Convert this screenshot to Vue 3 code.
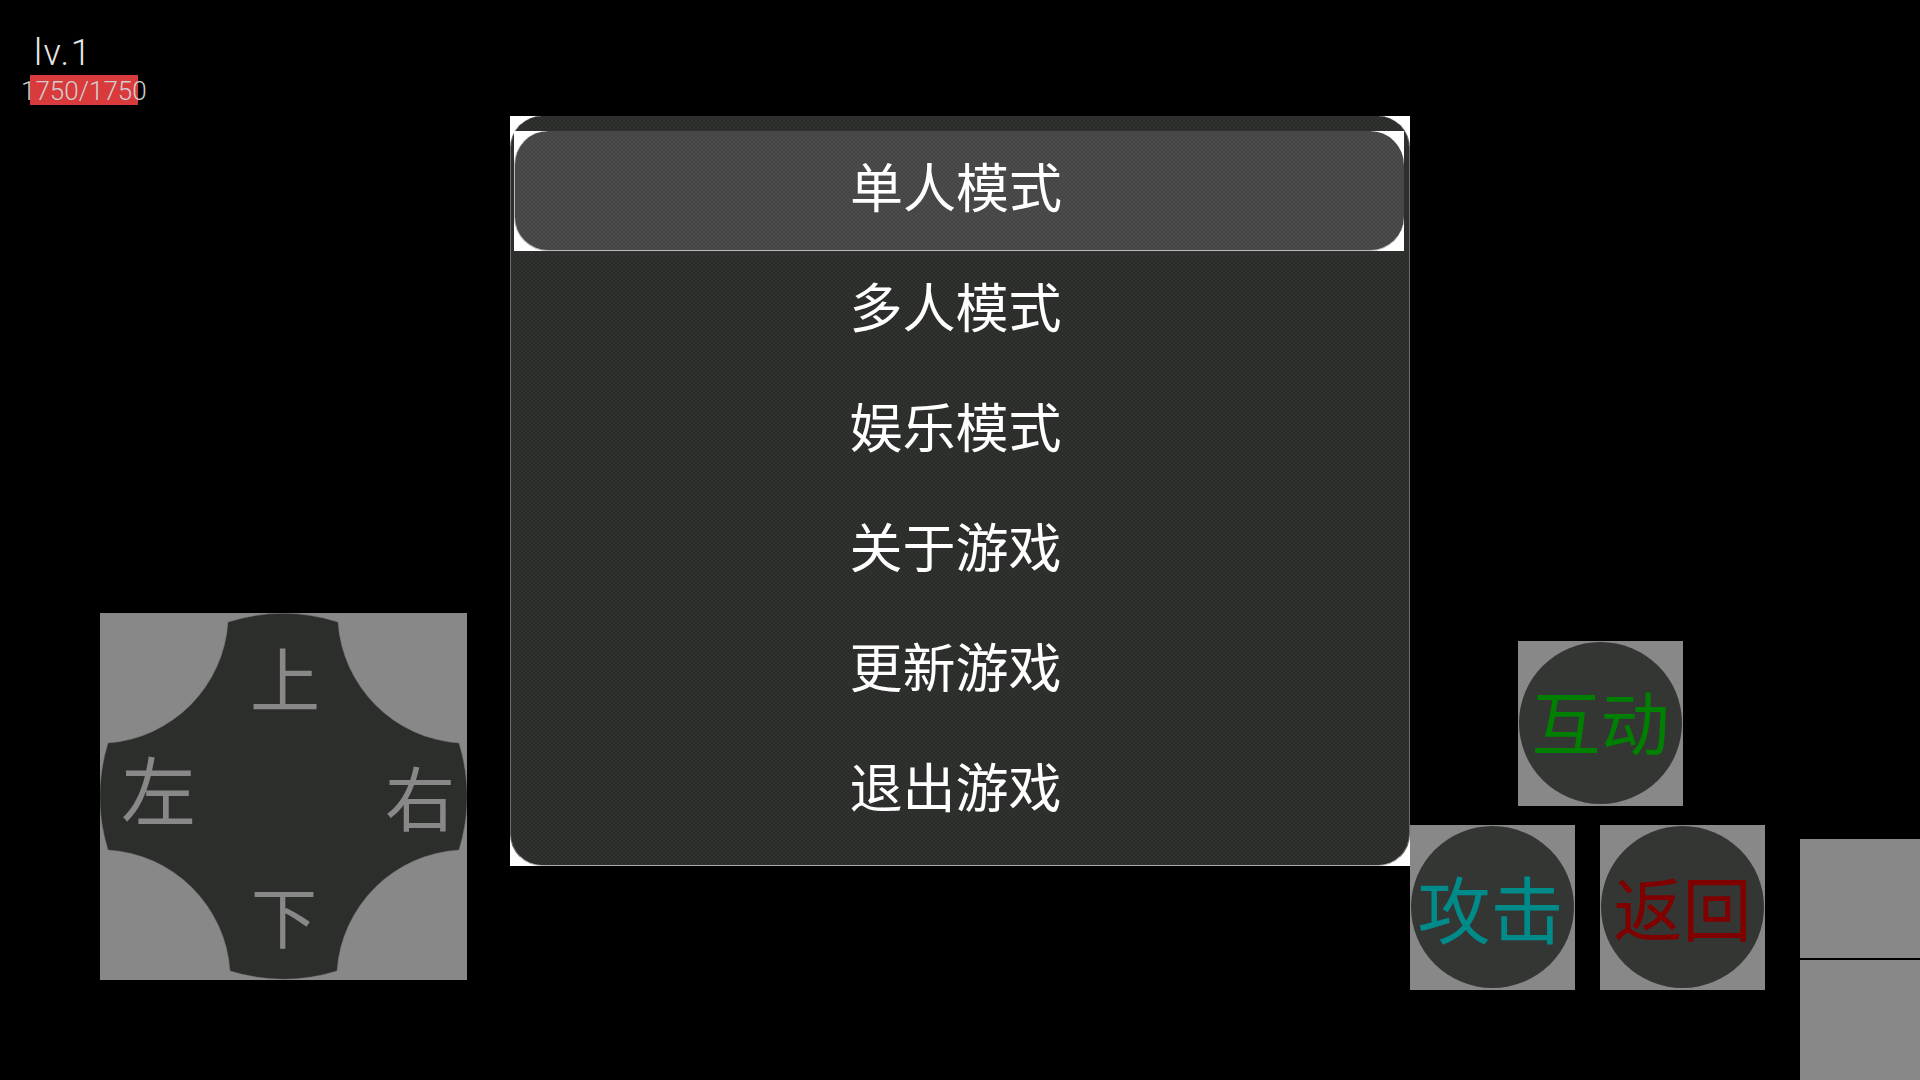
<script setup>
const menu = ['单人模式', '多人模式', '娱乐模式', '关于游戏', '更新游戏', '退出游戏']
</script>

<template>
  <div class="stage">
    <div class="col-left">
      <div class="hud">
        <div class="level">lv.1</div>
        <div class="hp"><span class="hp-text">1750/1750</span></div>
      </div>
      <div class="dpad">
        <svg class="dpad-shape" width="367" height="367" viewBox="0 0 367 367">
          <path class="dpad-fill" d="M128 9A183 183 0 0 1 238 9A130 130 0 0 0 359 130A183 183 0 0 1 359 237A130 130 0 0 0 237 358A183 183 0 0 1 130 358A130 130 0 0 0 8 237A183 183 0 0 1 8 130A130 130 0 0 0 128 9Z" />
        </svg>
        <span class="dir up">上</span>
        <span class="dir left">左</span>
        <span class="dir right">右</span>
        <span class="dir down">下</span>
      </div>
    </div>

    <div class="col-center">
      <div class="panel">
        <div class="panel-inner">
          <div
            v-for="(item, i) in menu"
            :key="item"
            class="row"
            :class="{ active: i === 0 }"
          >
            <div class="row-body">{{ item }}</div>
          </div>
        </div>
      </div>
    </div>

    <div class="col-right">
      <div class="actions">
        <div class="action interact"><div class="disc">互动</div></div>
        <div class="action-row">
          <div class="action attack"><div class="disc">攻击</div></div>
          <div class="action back"><div class="disc">返回</div></div>
        </div>
      </div>
      <div class="side">
        <div class="side-top"></div>
        <div class="side-bottom"></div>
      </div>
    </div>
  </div>
</template>

<style>
html, body { margin: 0; background: #000; }
</style>

<style scoped>
.stage {
  width: 1920px;
  height: 1080px;
  background: #000;
  display: flex;
  overflow: hidden;
  font-family: "Noto Sans CJK SC", "Liberation Sans", sans-serif;
}
.col-left {
  width: 510px;
  flex: none;
  display: flex;
  flex-direction: column;
}
.hud {
  padding: 32px 0 0 22px;
  height: 80px;
}
.level {
  margin-left: 12px;
  font-family: Roboto, sans-serif;
  font-weight: 300;
  font-size: 36px;
  line-height: 42px;
  letter-spacing: 1.5px;
  color: #e6e6e6;
}
.hp {
  margin: 1px 0 0 8px;
  width: 108px;
  height: 30px;
  background: #d93a3c;
}
.hp-text {
  display: block;
  margin-left: -9px;
  padding-top: 1px;
  font-family: Roboto, sans-serif;
  font-weight: 300;
  font-size: 26px;
  line-height: 30px;
  white-space: nowrap;
  color: #d0d0d0;
}
.dpad {
  position: relative;
  width: 367px;
  height: 367px;
  margin: auto 0 100px 100px;
  background: #888;
  color: #888;
}
.dpad-shape { display: block; }
.dpad-fill { fill: #2c2e2b; stroke: #777; stroke-width: 0.5; }
.dir {
  position: absolute;
  line-height: 1;
  font-weight: 400;
}
.up { left: 150px; top: 29px; font-size: 70px; }
.left { left: 21px; top: 137px; font-size: 75px; }
.right { left: 285px; top: 148px; font-size: 70px; }
.down { left: 151px; top: 268px; font-size: 66px; }

.col-center {
  width: 900px;
  flex: none;
  padding-top: 116px;
}
.panel {
  height: 750px;
  background: #fff;
}
.panel-inner {
  box-sizing: border-box;
  height: 100%;
  padding: 15px 5px 0 4px;
  border-radius: 32px;
  border: 1px solid #6a6a6a;
  border-top: 0;
  border-bottom-color: #aaa;
  background: repeating-conic-gradient(#2a2c29 0 25%, #30322f 0 50%) 0 0 / 4px 4px;
}
.row {
  height: 120px;
  margin-left: -1px;
}
.row-body {
  box-sizing: border-box;
  height: 100%;
  padding: 0 7px 12px 0;
  display: flex;
  align-items: center;
  justify-content: center;
  font-size: 53px;
  color: #fff;
}
.row.active { background: #fff; }
.row.active .row-body {
  border-radius: 34px;
  border-bottom: 1px solid #bbb;
  border-left: 1px solid #bbb;
  background: repeating-conic-gradient(#444544 0 25%, #4a4b4a 0 50%) 0 0 / 4px 4px;
}

.col-right {
  flex: 1;
  display: flex;
  min-width: 0;
}
.actions {
  width: 390px;
  flex: none;
  padding-top: 641px;
}
.action {
  width: 165px;
  height: 165px;
  background: #888;
  padding: 1px 1px 2px;
  box-sizing: border-box;
}
.interact { margin-left: 108px; }
.action-row {
  display: flex;
  gap: 25px;
  margin-top: 19px;
}
.disc {
  height: 100%;
  border-radius: 50%;
  background: #343634;
  display: flex;
  align-items: center;
  justify-content: center;
  white-space: nowrap;
  padding-bottom: 2px;
  box-sizing: border-box;
}
.interact .disc { color: #008000; font-size: 69px; padding-bottom: 6px; }
.attack .disc { color: #008b8b; font-size: 73px; padding-right: 4px; }
.back .disc { color: #800000; font-size: 69px; }
.side {
  width: 120px;
  flex: none;
  padding-top: 839px;
  display: flex;
  flex-direction: column;
}
.side-top {
  height: 119px;
  background: #888;
}
.side-bottom {
  height: 120px;
  margin-top: 2px;
  background: #888;
}
</style>
